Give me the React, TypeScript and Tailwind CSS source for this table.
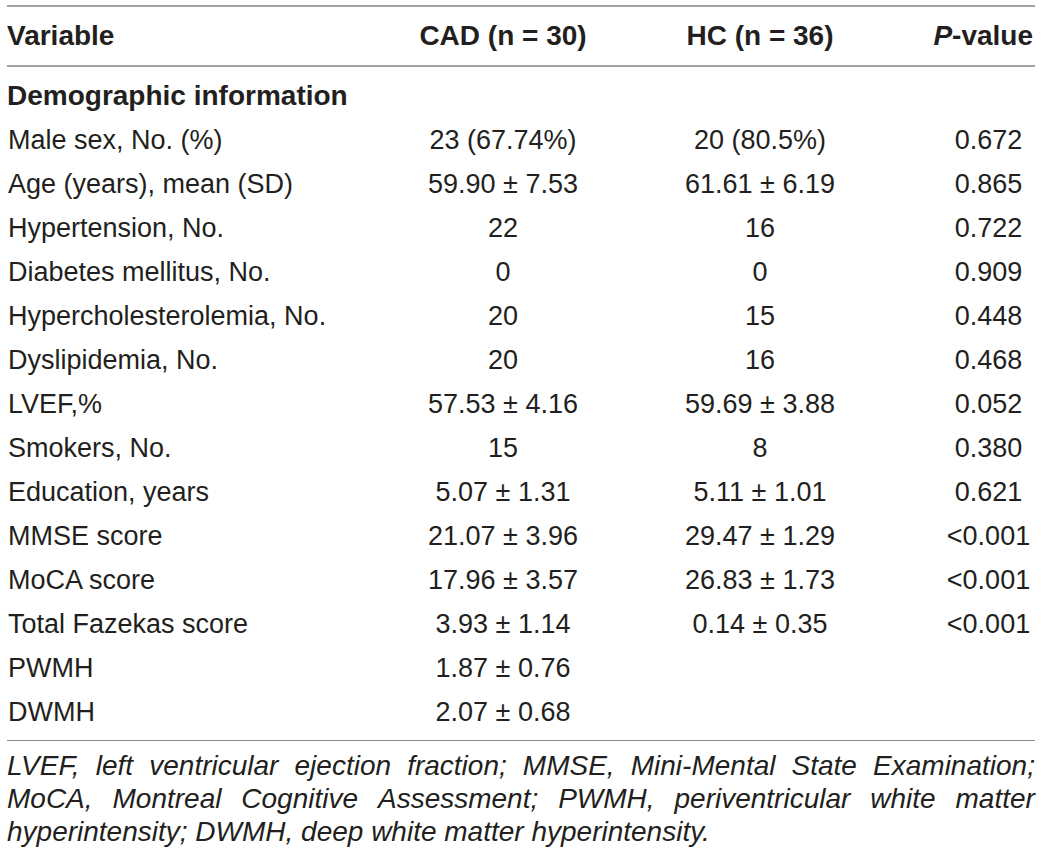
import React from "react";

const rows: [string, string, string, string][] = [
  ["Male sex, No. (%)", "23 (67.74%)", "20 (80.5%)", "0.672"],
  ["Age (years), mean (SD)", "59.90 ± 7.53", "61.61 ± 6.19", "0.865"],
  ["Hypertension, No.", "22", "16", "0.722"],
  ["Diabetes mellitus, No.", "0", "0", "0.909"],
  ["Hypercholesterolemia, No.", "20", "15", "0.448"],
  ["Dyslipidemia, No.", "20", "16", "0.468"],
  ["LVEF,%", "57.53 ± 4.16", "59.69 ± 3.88", "0.052"],
  ["Smokers, No.", "15", "8", "0.380"],
  ["Education, years", "5.07 ± 1.31", "5.11 ± 1.01", "0.621"],
  ["MMSE score", "21.07 ± 3.96", "29.47 ± 1.29", "<0.001"],
  ["MoCA score", "17.96 ± 3.57", "26.83 ± 1.73", "<0.001"],
  ["Total Fazekas score", "3.93 ± 1.14", "0.14 ± 0.35", "<0.001"],
  ["PWMH", "1.87 ± 0.76", "", ""],
  ["DWMH", "2.07 ± 0.68", "", ""],
];

export default function App() {
  return (
    <div
      className="w-[1042px] h-[861px] bg-white text-[#231f20] px-[7px] pt-[5px]"
      style={{ fontFamily: '"Liberation Sans", Arial, Helvetica, sans-serif' }}
    >
      <div className="border-t-2 border-b-2 border-[#a3a3a3] h-[62px] flex items-center text-[28px] font-bold">
        <div className="w-[367px]">Variable</div>
        <div className="w-[258px] text-center">CAD (n = 30)</div>
        <div className="w-[256px] text-center">HC (n = 36)</div>
        <div className="flex-1 text-right pr-[2px]">
          <span className="italic">P</span>-value
        </div>
      </div>
      <div className="pt-[7px] pb-[6px] border-b border-[#8a8a8a] text-[27px]">
        <div className="h-[44px] flex items-center font-bold text-[28px]">Demographic information</div>
        {rows.map((r) => (
          <div key={r[0]} className="h-[44px] flex items-center">
            <div className="w-[367px] pl-[1px]">{r[0]}</div>
            <div className="w-[258px] text-center">{r[1]}</div>
            <div className="w-[256px] text-center">{r[2]}</div>
            <div className="flex-1 pl-[58px] pr-[4px] text-center">{r[3]}</div>
          </div>
        ))}
      </div>
      <div className="pt-[8px] text-[28px] italic leading-[33px]">
        <div className="text-justify [text-align-last:justify] whitespace-nowrap flex justify-between">
          {"LVEF, left ventricular ejection fraction; MMSE, Mini-Mental State Examination;"
            .split(" ")
            .map((w, i) => (
              <span key={i}>{w}</span>
            ))}
        </div>
        <div className="whitespace-nowrap flex justify-between">
          {"MoCA, Montreal Cognitive Assessment; PWMH, periventricular white matter"
            .split(" ")
            .map((w, i) => (
              <span key={i}>{w}</span>
            ))}
        </div>
        <div className="whitespace-nowrap">hyperintensity; DWMH, deep white matter hyperintensity.</div>
      </div>
    </div>
  );
}
